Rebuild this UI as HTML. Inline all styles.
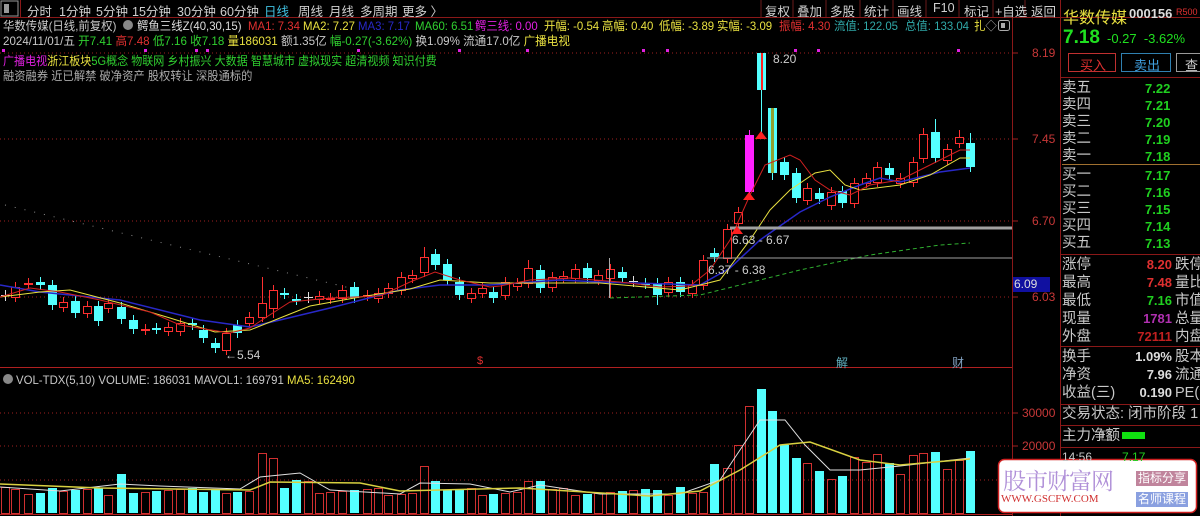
<!DOCTYPE html>
<html><head><meta charset="utf-8">
<style>
*{margin:0;padding:0;box-sizing:border-box}
body{width:1200px;height:516px;background:#000;overflow:hidden;position:relative;font-family:"Liberation Sans","Noto Sans CJK SC",sans-serif;color:#c8c8c8}
.a{position:absolute;white-space:nowrap}
.t{font-size:12px;line-height:14px;transform:scaleX(0.95);transform-origin:0 0}
.tb{font-size:12.5px;color:#d0d0d0;top:1px}
.rp{position:absolute;left:1062px;font-size:14.5px;color:#c8c8c8;line-height:17px;white-space:nowrap}
.rv{position:absolute;font-size:13px;font-weight:bold;color:#20d020;line-height:17px;white-space:nowrap}
.ax{position:absolute;font-size:12px;color:#c83838;left:1032px}
</style></head><body>
<svg class="a" style="left:0;top:0" width="1200" height="516" id="s">
<line x1="0" y1="17.5" x2="1200" y2="17.5" stroke="#8a1818"/>
<line x1="1012.5" y1="18" x2="1012.5" y2="516" stroke="#8a1818"/>
<line x1="1060.5" y1="0" x2="1060.5" y2="516" stroke="#8a1818"/>
<line x1="0" y1="367.5" x2="1012" y2="367.5" stroke="#b02020"/>
<line x1="0" y1="514.5" x2="1012" y2="514.5" stroke="#b02020"/>
<rect x="1" y="1" width="17" height="15" fill="none" stroke="#999"/>
<rect x="4" y="4" width="5" height="9" fill="#999"/>
<line x1="20.5" y1="0" x2="20.5" y2="17" stroke="#8a1818"/>
<g stroke="#6a1a1a"><line x1="761" y1="0" x2="761" y2="17"/><line x1="793" y1="0" x2="793" y2="17"/><line x1="826" y1="0" x2="826" y2="17"/><line x1="860" y1="0" x2="860" y2="17"/><line x1="893" y1="0" x2="893" y2="17"/><line x1="926" y1="0" x2="926" y2="17"/><line x1="959" y1="0" x2="959" y2="17"/><line x1="993" y1="0" x2="993" y2="17"/><line x1="1025" y1="0" x2="1025" y2="17"/></g>
<g stroke="#a02020" stroke-dasharray="1,3"><line x1="0" y1="53" x2="1012" y2="53"/><line x1="0" y1="139" x2="1012" y2="139"/><line x1="0" y1="221" x2="1012" y2="221"/><line x1="0" y1="297" x2="1012" y2="297"/><line x1="0" y1="413" x2="1012" y2="413"/><line x1="0" y1="446" x2="1012" y2="446"/><line x1="0" y1="480" x2="1012" y2="480"/></g>
<g stroke="#a02020"><line x1="1012" y1="53" x2="1018" y2="53"/><line x1="1012" y1="139" x2="1018" y2="139"/><line x1="1012" y1="221" x2="1018" y2="221"/><line x1="1012" y1="297" x2="1018" y2="297"/><line x1="1012" y1="413" x2="1018" y2="413"/><line x1="1012" y1="446" x2="1018" y2="446"/></g>
<rect x="1013" y="277" width="37" height="15" fill="#1010a0"/>
<line x1="5" y1="205" x2="350" y2="288" stroke="#8a8a8a" stroke-dasharray="1,9"/>
<g id="c"></g>
<polyline fill="none" stroke="#2828c8" stroke-width="1.5" points="0,285 40,292 120,300 200,320 250,327 280,320 330,308 400,290 440,285 490,285 560,280 600,282 700,285 730,268 760,240 800,212 830,197 860,185 880,178 900,182 940,172 970,168"/>
<polyline fill="none" stroke="#e8e040" points="0,297 40,292 70,290 120,303 170,318 215,332 250,330 280,318 310,306 360,297 410,289 440,280 490,283 530,283 600,283 680,290 720,280 750,240 770,210 790,190 815,173 830,170 845,185 860,190 900,185 930,175 960,158 970,158"/>
<polyline fill="none" stroke="#d02020" points="0,297 30,288 60,292 100,300 150,312 180,325 230,333 250,328 265,318 290,302 330,298 380,296 410,282 435,272 460,280 490,287 500,286 530,280 570,278 620,282 660,287 690,286 710,270 730,240 750,195 765,165 790,155 800,160 815,180 830,190 850,195 870,185 900,180 930,165 960,150 970,150"/>
<polyline fill="none" stroke="#30b030" stroke-dasharray="4,3" points="610,298 700,295 740,285 800,270 870,255 940,245 970,243"/>
<line x1="609.5" y1="258" x2="609.5" y2="298" stroke="#aaa"/>
<line x1="730" y1="228" x2="1012" y2="228" stroke="#a0a0a0" stroke-width="3"/>
<line x1="707" y1="258" x2="1012" y2="258" stroke="#a0a0a0"/>
<g fill="#ff2020"><polygon points="737,226 731,234 743,234"/><polygon points="749,192 743,200 755,200"/><polygon points="761,131 755,139 767,139"/></g>
<g fill="#e020e0" id="d"></g>
<g id="v"></g>
<polyline fill="none" stroke="#e0e0e0" points="0,487 60,491 120,484 160,486 240,489 260,477 300,473 330,490 400,494 420,483 470,484 510,492 540,485 600,494 680,494 720,480 760,420 785,420 805,445 830,470 860,470 900,466 970,458"/>
<polyline fill="none" stroke="#d8d040" stroke-width="1.5" points="0,484 100,488 250,490 270,482 360,483 400,491 520,488 650,496 700,491 740,470 780,445 810,442 860,460 900,465 970,459"/>
<circle cx="8" cy="379" r="5" fill="#888"/>
<circle cx="128" cy="25" r="5" fill="#888"/>
<rect x="998.5" y="20.5" width="11" height="10" rx="2" fill="none" stroke="#aaa"/>
<rect x="1001" y="23" width="4" height="5" fill="#aaa"/>
<line x1="1062" y1="164.5" x2="1200" y2="164.5" stroke="#a07030"/>
<g stroke="#8a1818"><line x1="1060" y1="77.5" x2="1200" y2="77.5"/><line x1="1060" y1="254.5" x2="1200" y2="254.5"/><line x1="1060" y1="346.5" x2="1200" y2="346.5"/><line x1="1060" y1="404.5" x2="1200" y2="404.5"/><line x1="1060" y1="425.5" x2="1200" y2="425.5"/><line x1="1060" y1="447.5" x2="1200" y2="447.5"/></g>
<rect x="1068.5" y="53.5" width="47" height="18" fill="none" stroke="#c03030"/>
<rect x="1121.5" y="53.5" width="49" height="18" fill="none" stroke="#3080b0"/>
<rect x="1176.5" y="53.5" width="30" height="18" fill="none" stroke="#999"/>
<rect x="1122" y="432" width="23" height="7" fill="#10e010"/>
<rect x="1102" y="431" width="8" height="9" fill="none" stroke="#888"/>
<rect x="998.5" y="459.5" width="198" height="53" rx="6" fill="#fff" stroke="#d02020" stroke-width="1.5"/>
<rect x="1136" y="471" width="52" height="15" fill="#c0849c"/>
<rect x="1136" y="492" width="52" height="15" fill="#8aa0e0"/>
</svg>

<div class="a tb" style="left:27px">分时</div>
<div class="a tb" style="left:59px">1分钟</div>
<div class="a tb" style="left:96px">5分钟</div>
<div class="a tb" style="left:132px">15分钟</div>
<div class="a tb" style="left:177px">30分钟</div>
<div class="a tb" style="left:220px">60分钟</div>
<div class="a tb" style="left:264px;color:#40c0e0">日线</div>
<div class="a tb" style="left:298px">周线</div>
<div class="a tb" style="left:329px">月线</div>
<div class="a tb" style="left:360px">多周期</div>
<div class="a tb" style="left:402px">更多 〉</div>
<div class="a tb" style="left:765px">复权</div><div class="a tb" style="left:797px">叠加</div><div class="a tb" style="left:830px">多股</div><div class="a tb" style="left:864px">统计</div><div class="a tb" style="left:897px">画线</div><div class="a tb" style="left:933px">F10</div><div class="a tb" style="left:964px">标记</div><div class="a tb" style="left:995px">+自选</div><div class="a tb" style="left:1031px">返回</div>

<div class="a t" style="left:3px;top:19px">华数传媒(日线,前复权)</div>
<div class="a t" style="left:137px;top:19px;color:#ddd">鳄鱼三线Z(40,30,15)</div>
<div class="a t" style="left:248px;top:19px;color:#e03030">MA1: 7.34</div>
<div class="a t" style="left:303px;top:19px;color:#e8e040">MA2: 7.27</div>
<div class="a t" style="left:358px;top:19px;color:#2828c8">MA3: 7.17</div>
<div class="a t" style="left:415px;top:19px;color:#30d030">MA60: 6.51</div>
<div class="a t" style="left:475px;top:19px;color:#e020e0">鳄三线: 0.00</div>
<div class="a t" style="left:544px;top:19px;color:#e8e040">开幅: -0.54</div>
<div class="a t" style="left:602px;top:19px;color:#e8e040">高幅: 0.40</div>
<div class="a t" style="left:659px;top:19px;color:#e8e040">低幅: -3.89</div>
<div class="a t" style="left:717px;top:19px;color:#e8e040">实幅: -3.09</div>
<div class="a t" style="left:779px;top:19px;color:#e03030">振幅: 4.30</div>
<div class="a t" style="left:834px;top:19px;color:#30a8a8">流值: 122.05</div>
<div class="a t" style="left:905px;top:19px;color:#30a8a8">总值: 133.04</div>
<div class="a t" style="left:974px;top:19px;color:#e8e040">扎<span style="color:#aaa">◇</span></div>
<div class="a t" style="left:3px;top:34px;transform:scaleX(0.965)">2024/11/01/五 <span style="color:#30d030">开7.41</span> <span style="color:#e03030">高7.48</span> <span style="color:#30d030">低7.16 收7.18</span> <span style="color:#e8e040">量186031</span> 额1.35亿 <span style="color:#30d030">幅-0.27(-3.62%)</span> 换1.09% 流通17.0亿 <span style="color:#e8e040">广播电视</span></div>
<div class="a t" style="left:3px;top:54px;transform:scaleX(0.92)"><span style="color:#e020e0">广播电视</span><span style="color:#e8e040">浙江板块</span><span style="color:#30d030">5G概念 物联网 乡村振兴 大数据 智慧城市 虚拟现实 超清视频 知识付费</span></div>
<div class="a t" style="left:3px;top:69px;color:#aaa;transform:scaleX(0.94)">融资融券 近已解禁 破净资产 股权转让 深股通标的</div>

<div class="a" style="left:773px;top:52px;color:#ccc;font-size:12px">8.20</div>
<div class="a" style="left:225px;top:348px;color:#ccc;font-size:12px">←5.54</div>
<div class="a" style="left:732px;top:233px;color:#ccc;font-size:12px">6.63 - 6.67</div>
<div class="a" style="left:708px;top:263px;color:#ccc;font-size:12px">6.37 - 6.38</div>
<div class="a" style="left:477px;top:355px;color:#e03030;font-size:11px">$</div>
<div class="a" style="left:836px;top:354px;color:#60b0c0;font-size:12px">解</div>
<div class="a" style="left:952px;top:354px;color:#80a0c0;font-size:12px">财</div>
<div class="a" style="left:16px;top:373px;font-size:12px;transform:scaleX(0.95);transform-origin:0 0">VOL-TDX(5,10) VOLUME: 186031 MAVOL1: 169791 <span style="color:#e8e040">MA5: 162490</span></div>

<div class="ax" style="top:46px">8.19</div>
<div class="ax" style="top:132px">7.45</div>
<div class="ax" style="top:214px">6.70</div>
<div class="ax" style="top:290px">6.03</div>
<div class="a" style="left:1014px;top:277px;font-size:12px;color:#ddd">6.09</div>
<div class="ax" style="top:406px;left:1022px">30000</div>
<div class="ax" style="top:439px;left:1022px">20000</div>

<div class="a" style="left:1063px;top:4px;font-size:16px;color:#e8e040">华数传媒</div>
<div class="a" style="left:1129px;top:6px;font-size:13px;color:#ddd;font-weight:bold">000156</div>
<div class="a" style="left:1176px;top:7px;font-size:9px;color:#e03030">R500</div>
<div class="a" style="left:1063px;top:27px;font-size:19px;color:#20e020;font-weight:bold">7.18</div>
<div class="a" style="left:1107px;top:31px;font-size:13px;color:#20e020">-0.27 &nbsp;-3.62%</div>
<div class="a" style="left:1080px;top:55px;font-size:13px;color:#e03030">买入</div>
<div class="a" style="left:1134px;top:55px;font-size:13px;color:#40a0e0">卖出</div>
<div class="a" style="left:1185px;top:55px;font-size:13px;color:#ccc">查</div>

<div class="rp" style="top:80px">卖五<br>卖四<br>卖三<br>卖二<br>卖一</div>
<div class="rv" style="top:80px;left:1145px">7.22<br>7.21<br>7.20<br>7.19<br>7.18</div>
<div class="rp" style="top:167px">买一<br>买二<br>买三<br>买四<br>买五</div>
<div class="rv" style="top:167px;left:1145px">7.17<br>7.16<br>7.15<br>7.14<br>7.13</div>
<div class="rp" style="top:256px;line-height:18px">涨停<br>最高<br>最低<br>现量<br>外盘</div>
<div class="rv" style="top:256px;left:1126px;line-height:18px;text-align:right;width:46px"><span style="color:#e03030">8.20</span><br><span style="color:#e03030">7.48</span><br>7.16<br><span style="color:#b030b0">1781</span><br><span style="color:#c02020">72111</span></div>
<div class="rp" style="top:256px;left:1175px;line-height:18px">跌停<br>量比<br>市值<br>总量<br>内盘</div>
<div class="rp" style="top:348px;line-height:18px">换手<br>净资<br>收益(三)</div>
<div class="rv" style="top:348px;left:1120px;line-height:18px;text-align:right;width:52px;color:#ddd">1.09%<br>7.96<br>0.190</div>
<div class="rp" style="top:348px;left:1175px;line-height:18px">股本<br>流通<br>PE(动</div>
<div class="rp" style="top:406px">交易状态: 闭市阶段 1</div>
<div class="rp" style="top:428px">主力净额</div>
<div class="rp" style="top:449px;font-size:12px">14:56 &nbsp; &nbsp; &nbsp; &nbsp; <span style="color:#20d020">7.17</span></div>

<div class="a" style="left:1003px;top:463px;font-size:23px;color:#b090d8;font-family:'Noto Serif CJK SC',serif;letter-spacing:-1px">股市财富网</div>
<div class="a" style="left:1001px;top:493px;font-size:11px;color:#d03030;font-family:'Liberation Serif',serif">WWW.GSCFW.COM</div>
<div class="a" style="left:1138px;top:471px;font-size:12px;color:#fff;line-height:15px">指标分享</div>
<div class="a" style="left:1138px;top:492px;font-size:12px;color:#fff;line-height:15px">名师课程</div>

<script>
var C=[[5,295,296,'w'],[15,287,297,'r'],[28,283,284,'r'],[40,282,285,'c'],[52,285,305,'c'],[63,302,307,'r'],[75,301,313,'c'],[87,306,313,'r'],[98,306,321,'c'],[108,303,308,'r'],[121,307,319,'c'],[133,320,329,'c'],[145,329,330,'r'],[156,328,329,'c'],[168,327,331,'r'],[180,323,331,'r'],[192,323,325,'c'],[203,330,338,'c'],[215,343,348,'c'],[226,333,350,'r'],[237,325,333,'c'],[249,317,323,'r'],[262,303,317,'r'],[273,290,308,'r'],[284,293,294,'c'],[296,299,300,'c'],[308,297,298,'w'],[319,296,299,'r'],[330,298,299,'r'],[342,290,298,'r'],[354,287,298,'c'],[367,295,296,'r'],[378,293,298,'r'],[388,288,293,'r'],[401,277,290,'r'],[412,275,278,'r'],[424,257,272,'r'],[435,254,265,'c'],[447,264,280,'c'],[459,282,295,'c'],[471,293,298,'r'],[482,288,293,'r'],[493,292,298,'c'],[505,282,295,'r'],[517,283,286,'r'],[528,268,283,'r'],[540,270,288,'c'],[552,277,287,'r'],[563,276,278,'r'],[575,269,278,'r'],[587,268,278,'c'],[598,275,280,'r'],[610,269,278,'r'],[622,272,278,'c'],[633,281,282,'w'],[645,283,284,'c'],[657,283,295,'c'],[668,282,292,'r'],[680,282,292,'c'],[692,285,293,'r'],[703,260,285,'r'],[714,253,257,'c'],[727,229,258,'r'],[738,212,223,'r'],[749,135,192,'m'],[761,53,90,'L'],[772,108,173,'c'],[784,162,175,'c'],[796,173,198,'c'],[807,188,200,'r'],[819,193,199,'c'],[831,192,205,'r'],[842,191,203,'c'],[854,183,203,'r'],[866,178,183,'r'],[877,167,182,'r'],[889,168,175,'c'],[900,178,183,'r'],[913,162,182,'r'],[923,134,158,'r'],[935,132,158,'c'],[947,149,160,'r'],[959,137,143,'r'],[970,143,167,'c']];
var W={262:[277,0],424:[247,0],761:[53,133],772:[108,180],923:[128,0],935:[119,0],959:[130,0],970:[133,0],610:[0,298],528:[260,0],657:[0,305],273:[0,318]};
var V={5:487,15:489,52:488,121:474,262:453,273:458,296:480,308:481,424:466,435:481,528:481,540:481,657:490,680:487,714:464,727:468,738:445,749:406,761:389,772:411,784:445,796:458,807:463,819:471,831:479,842:476,854:457,866:462,877:454,889:463,900:474,913:455,923:453,935:452,947:469,959:460,970:451,203:492,215:490,330:492,500:490};
var ns='http://www.w3.org/2000/svg',g=document.getElementById('c'),vg=document.getElementById('v');
function el(p,t,a){var e=document.createElementNS(ns,t);for(var k in a)e.setAttribute(k,a[k]);p.appendChild(e);return e;}
var col={r:'#ff3030',c:'#54ffff',w:'#e0e0e0',m:'#ff20ff',L:'#54ffff'};
C.forEach(function(d,i){var x=d[0],t=d[1],b=d[2],k=d[3],cl=col[k];var w=W[x]||[0,0];var hi=w[0]||t-5,lo=w[1]||b+5;
el(g,'line',{x1:x+.5,y1:hi,x2:x+.5,y2:lo,stroke:cl});
if(k=='r')el(g,'rect',{x:x-3.5,y:t+.5,width:8,height:Math.max(b-t,1),fill:'#000',stroke:cl});
else if(k=='w')el(g,'line',{x1:x-4,y1:t+.5,x2:x+5,y2:t+.5,stroke:cl});
else{el(g,'rect',{x:x-4,y:t,width:9,height:Math.max(b-t,2),fill:cl});if(k=='L')el(g,'rect',{x:x,y:t,width:2,height:b-t,fill:'#ff2020'});if(x==772)el(g,'rect',{x:x-1,y:t,width:3,height:b-t,fill:'#90a030'});}
var vt=V[x]||(488+((i*7)%8));var vc=(k=='c'||k=='L');
if(vc)el(vg,'rect',{x:x-4,y:vt,width:9,height:513-vt,fill:'#54ffff'});else el(vg,'rect',{x:x-3.5,y:vt+.5,width:8,height:513-vt,fill:'none',stroke:'#d03030'});
});
var dg=document.getElementById('d');[3,145,196,207,358,459,527,643,667,795,818,958].forEach(function(x){el(dg,'rect',{x:x-1,y:49,width:3,height:3});});
</script>
</body></html>
